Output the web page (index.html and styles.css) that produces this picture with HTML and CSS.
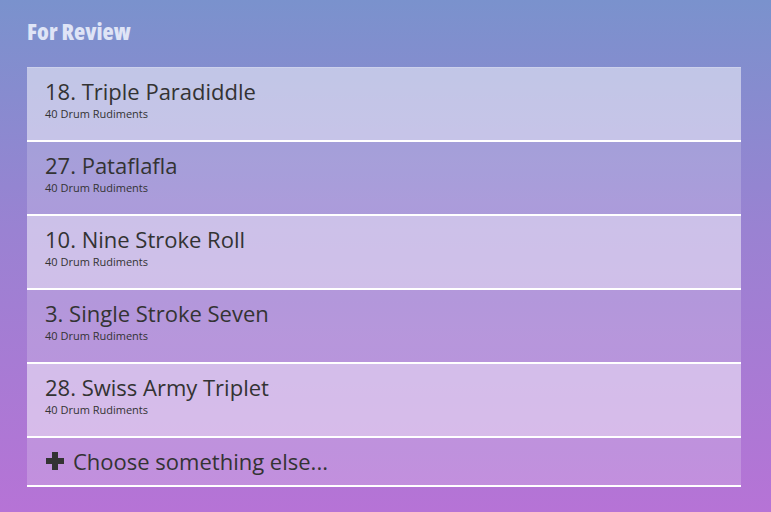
FILE: index.html
```html
<!DOCTYPE html>
<html>
<head>
<meta charset="utf-8">
<link rel="stylesheet" href="styles.css">
</head>
<body>
<div class="page">
  <h2 class="heading">For Review</h2>
  <ul class="list">
    <li class="item"><div class="title">18. Triple Paradiddle</div><div class="sub">40 Drum Rudiments</div></li>
    <li class="item alt"><div class="title">27. Pataflafla</div><div class="sub">40 Drum Rudiments</div></li>
    <li class="item"><div class="title">10. Nine Stroke Roll</div><div class="sub">40 Drum Rudiments</div></li>
    <li class="item alt"><div class="title">3. Single Stroke Seven</div><div class="sub">40 Drum Rudiments</div></li>
    <li class="item"><div class="title">28. Swiss Army Triplet</div><div class="sub">40 Drum Rudiments</div></li>
    <li class="item alt choose"><div class="title"><svg class="plus" width="20" height="20" viewBox="0 0 20 20"><path d="M7 1h6v6h6v6h-6v6H7v-6H1V7h6z" fill="#333"/></svg>Choose something else...</div></li>
  </ul>
</div>
</body>
</html>
```
FILE: styles.css
```css
html, body {
  margin: 0;
  padding: 0;
  height: 100%;
}
body {
  background: linear-gradient(180deg, #7a92cd 0%, #9a82d2 45%, #b673d6 100%);
  font-family: "Open Sans", sans-serif;
  color: #333;
}
.page {
  padding: 16px 30px 0 27px;
}
.heading {
  margin: 0 0 20px 0;
  font-family: "Open Sans", sans-serif;
  font-weight: 800;
  font-stretch: 75%;
  font-size: 23px;
  line-height: 31px;
  color: #dfe4f6;
  letter-spacing: 0;
}
.list {
  list-style: none;
  margin: 0;
  padding: 0;
  border-top: 1px solid rgba(255,255,255,0.6);
}
.item {
  box-sizing: border-box;
  height: 74px;
  padding: 8px 18px 0 18px;
  background: rgba(255,255,255,0.5);
  border-bottom: 2px solid #fff;
}
.item.alt {
  background: rgba(255,255,255,0.2);
}
.item.choose {
  height: 49px;
  padding-top: 8px;
}
.title {
  font-size: 22px;
  line-height: 30px;
  color: #333;
  display: flex;
  align-items: center;
}
.sub {
  font-size: 11px;
  line-height: 16px;
  color: #333;
}
.plus {
  margin: 0 8px 0 0;
}
```
